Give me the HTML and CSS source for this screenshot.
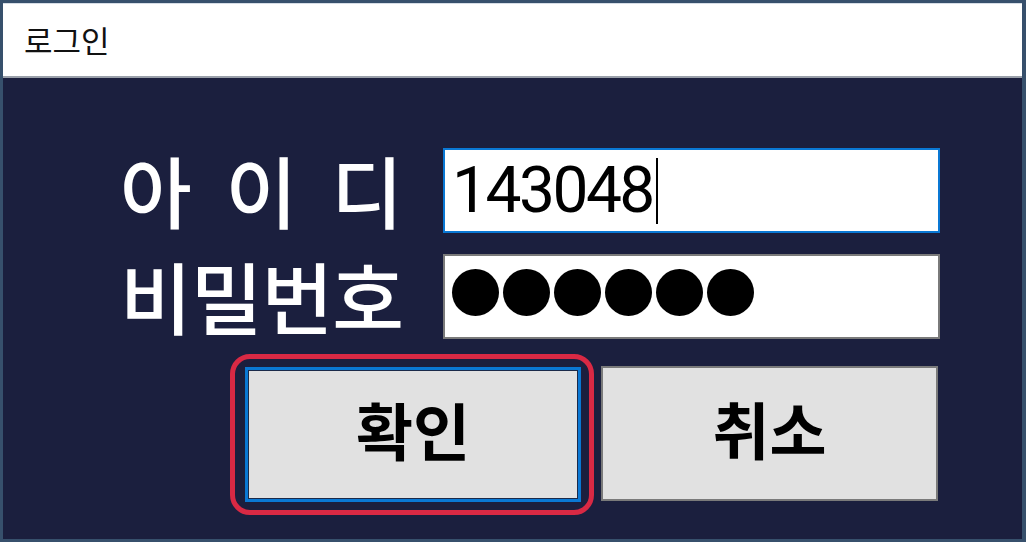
FILE: index.html
```html
<!DOCTYPE html>
<html lang="ko">
<head>
<meta charset="utf-8">
<title>로그인</title>
<link rel="stylesheet" href="styles.css">
</head>
<body>
<div class="window">
  <div class="titlebar"><span class="title">로그인</span></div>
  <div class="content">
    <div class="form">
      <div class="label spaced">아 이 디</div>
      <div class="field focused"><span class="value">143048</span><span class="caret"></span></div>
      <div class="label">비밀번호</div>
      <div class="field"><span class="dots"><i class="dot"></i><i class="dot"></i><i class="dot"></i><i class="dot"></i><i class="dot"></i><i class="dot"></i></span></div>
    </div>
    <div class="actions">
      <button class="btn btn-ok">확인</button>
      <button class="btn btn-cancel">취소</button>
    </div>
  </div>
</div>
</body>
</html>
```

FILE: styles.css
```css
* { box-sizing: border-box; }
html, body { margin: 0; padding: 0; width: 1026px; height: 542px; overflow: hidden; }
body { font-family: "Noto Sans CJK KR", "Noto Sans", sans-serif; background: #1b1f3e; }

.window {
  width: 1026px;
  height: 542px;
  border: 3px solid #37506c;
  border-right-width: 4px;
  display: flex;
  flex-direction: column;
  background: #1b1f3e;
}

.titlebar {
  height: 75px;
  background: #ffffff;
  border-top: 1px solid #d6dde6;
  border-bottom: 2px solid #9aa0aa;
  display: flex;
  align-items: center;
  padding-left: 21px;
}
.title {
  font-size: 31px;
  color: #111;
  line-height: 1;
  margin-top: -2px;
}

.content {
  flex: 1;
  display: flex;
  flex-direction: column;
  padding: 70px 0 0 117px;
}

.form {
  display: grid;
  grid-template-columns: 323px 497px;
  grid-auto-rows: 85px;
  row-gap: 21px;
}

.label {
  color: #ffffff;
  font-weight: 500;
  font-size: 78px;
  letter-spacing: -1px;
  line-height: 1;
  display: flex;
  align-items: center;
  white-space: nowrap;
  margin-top: -4px;
}
.label.spaced { word-spacing: 14px; }

.field {
  background: #ffffff;
  border: 2px solid #7a7a7a;
  display: flex;
  align-items: center;
  padding-left: 7px;
}
.field.focused { border-color: #0a78d4; }

.value {
  font-family: "Roboto", "Noto Sans", sans-serif;
  font-size: 64px;
  color: #000;
  letter-spacing: -2.5px;
  line-height: 1;
}
.caret {
  display: inline-block;
  width: 2px;
  height: 66px;
  background: #000;
  margin-left: 3px;
}

.dots {
  display: flex;
  gap: 4px;
  margin-top: -8px;
}
.dot {
  display: block;
  width: 47px;
  height: 47px;
  border-radius: 50%;
  background: #000;
}

.actions {
  display: flex;
  gap: 20px;
  margin-top: 27px;
  padding-left: 125px;
}

.btn {
  width: 336px;
  height: 135px;
  background: #e1e1e1;
  border: 2px solid #7a7a7a;
  font-family: "Noto Sans CJK KR", sans-serif;
  font-weight: 700;
  font-size: 62px;
  color: #000;
  padding: 0 0 12px;
  line-height: 1;
}
.btn-cancel { width: 337px; }
.btn-ok {
  position: relative;
  border: 3px solid #0a78d4;
  box-shadow: inset 0 0 0 1px #1a2a4a;
  margin-top: 1px;
}
.btn-ok::after {
  content: "";
  position: absolute;
  top: -16px;
  bottom: -16px;
  left: -18px;
  right: -16px;
  border: 5px solid #d92944;
  border-radius: 20px;
}
```
